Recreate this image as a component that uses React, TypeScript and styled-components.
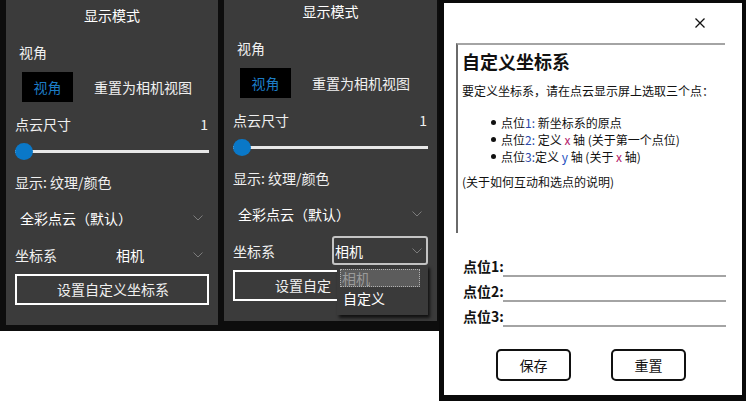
import React from 'react'
import styled, { createGlobalStyle } from 'styled-components'

const GlobalStyle = createGlobalStyle`
  html, body {
    margin: 0;
    padding: 0;
    background: #ffffff;
  }
  body {
    font-family: 'Noto Sans CJK SC', 'Noto Sans', sans-serif;
  }
`

const Chevron = () => (
  <svg width="10" height="6" viewBox="0 0 10 6">
    <polyline points="0.5,0.5 5,5 9.5,0.5" fill="none" stroke="#7c7c7c" strokeWidth="1" />
  </svg>
)

const CloseIcon = () => (
  <svg width="10" height="10" viewBox="0 0 10 10">
    <path d="M0.5 0.5 L9.5 9.5 M9.5 0.5 L0.5 9.5" stroke="#111" strokeWidth="1.3" />
  </svg>
)

interface PanelProps {
  showMenu?: boolean
  lift?: number
  width: number
  height: number
}

const DisplayPanel = ({ showMenu, lift = 0, width, height }: PanelProps) => (
  <Panel $width={width} $height={height}>
    <Title $lift={lift}>显示模式</Title>
    <SubLabel>视角</SubLabel>
    <ViewRow>
      <ViewButton>视角</ViewButton>
      <ResetText>重置为相机视图</ResetText>
    </ViewRow>
    <SizeRow>
      <span>点云尺寸</span>
      <span>1</span>
    </SizeRow>
    <Slider>
      <Track />
      <Thumb />
    </Slider>
    <PlainRow>显示: 纹理/颜色</PlainRow>
    <ColorRow>
      <Select $full>
        <span>全彩点云（默认）</span>
        <Chevron />
      </Select>
    </ColorRow>
    <CoordRow>
      <span>坐标系</span>
      <Select $open={showMenu}>
        <span>相机</span>
        <Chevron />
        {showMenu && (
          <Menu>
            <MenuItem $active>相机</MenuItem>
            <MenuItem>自定义</MenuItem>
          </Menu>
        )}
      </Select>
    </CoordRow>
    <OutlineButton>{showMenu ? '设置自定' : '设置自定义坐标系'}</OutlineButton>
  </Panel>
)

const App = () => (
  <>
    <GlobalStyle />
    <Page>
      <Stage>
        <DisplayPanel width={212} height={325} />
        <DisplayPanel width={213} height={321} lift={4} showMenu />
      </Stage>
      <Dialog>
        <CloseRow>
          <CloseIcon />
        </CloseRow>
        <InfoBox>
          <InfoTitle>自定义坐标系</InfoTitle>
          <InfoText>要定义坐标系，请在点云显示屏上选取三个点：</InfoText>
          <Steps>
            <Step>
              <Dot />
              <span>
                点位<Num>1:</Num> 新坐标系的原点
              </span>
            </Step>
            <Step>
              <Dot />
              <span>
                点位<Num>2:</Num> 定义 <Axis>x</Axis> 轴 (关于第一个点位)
              </span>
            </Step>
            <Step>
              <Dot />
              <span>
                点位<Num>3:</Num>定义 <Axis $y>y</Axis> 轴 (关于 <Axis>x</Axis> 轴)
              </span>
            </Step>
          </Steps>
          <Note>(关于如何互动和选点的说明)</Note>
        </InfoBox>
        <Fields>
          {['点位1:', '点位2:', '点位3:'].map((label) => (
            <FieldRow key={label}>
              <FieldLabel>{label}</FieldLabel>
              <FieldLine />
            </FieldRow>
          ))}
        </Fields>
        <Actions>
          <DialogButton>保存</DialogButton>
          <DialogButton>重置</DialogButton>
        </Actions>
      </Dialog>
    </Page>
  </>
)

const Page = styled.div`
  display: flex;
  align-items: flex-start;
  width: 746px;
  height: 401px;
`

const Stage = styled.div`
  box-sizing: border-box;
  display: flex;
  align-items: flex-start;
  gap: 6px;
  width: 439px;
  height: 331px;
  padding-left: 6px;
  background: #0d0d0d;
`

const Panel = styled.div<{ $width: number; $height: number }>`
  box-sizing: border-box;
  display: flex;
  flex-direction: column;
  width: ${(p) => p.$width}px;
  height: ${(p) => p.$height}px;
  padding: 0 9px;
  background: #3b3b3b;
  color: #f0f0f0;
  font-size: 14px;
  overflow: visible;
`

const Title = styled.div<{ $lift: number }>`
  height: 30px;
  margin-top: ${(p) => -p.$lift}px;
  line-height: 30px;
  text-align: center;
  color: #ffffff;
`

const SubLabel = styled.div`
  height: 24px;
  margin-top: 10px;
  padding-left: 4px;
  line-height: 24px;
`

const ViewRow = styled.div`
  display: flex;
  align-items: center;
  height: 30px;
  margin-top: 8px;
`

const ViewButton = styled.div`
  width: 51px;
  height: 30px;
  margin-left: 7px;
  background: #000000;
  color: #1c7cc4;
  line-height: 30px;
  text-align: center;
`

const ResetText = styled.span`
  margin-left: 21px;
`

const SizeRow = styled.div`
  display: flex;
  justify-content: space-between;
  align-items: center;
  height: 24px;
  margin-top: 10px;
  padding-right: 1px;
`

const Slider = styled.div`
  position: relative;
  display: flex;
  align-items: center;
  height: 17px;
  margin-top: 7px;
`

const Track = styled.div`
  flex: 1;
  height: 3px;
  background: #e8e8e8;
`

const Thumb = styled.div`
  position: absolute;
  left: 0;
  top: 0;
  width: 18px;
  height: 17px;
  border-radius: 50%;
  background: #0a78c8;
`

const PlainRow = styled.div`
  height: 24px;
  margin-top: 10px;
  line-height: 24px;
`

const ColorRow = styled.div`
  display: flex;
  height: 28px;
  margin-top: 10px;
`

const CoordRow = styled.div`
  display: flex;
  align-items: center;
  justify-content: space-between;
  height: 29px;
  margin-top: 8px;
`

const Select = styled.div<{ $full?: boolean; $open?: boolean }>`
  position: relative;
  box-sizing: border-box;
  display: flex;
  align-items: center;
  justify-content: space-between;
  width: ${(p) => (p.$full ? '100%' : '96px')};
  height: ${(p) => (p.$full ? '28px' : '29px')};
  padding: 0 4px 0 ${(p) => (p.$full ? '3px' : '1px')};
  border: 2px solid ${(p) => (p.$open ? '#c4c4c4' : 'transparent')};
  border-radius: 3px;
  color: #ffffff;
`

const Menu = styled.div`
  position: absolute;
  top: calc(100% + 2px);
  left: 3px;
  right: -2px;
  z-index: 2;
  box-sizing: border-box;
  height: 50px;
  padding: 4px 8px 0 3px;
  background: #3a3a3a;
  box-shadow: 2px 3px 3px rgba(0, 0, 0, 0.7);
`

const MenuItem = styled.div<{ $active?: boolean }>`
  box-sizing: border-box;
  height: ${(p) => (p.$active ? '18px' : '22px')};
  padding-left: ${(p) => (p.$active ? '1px' : '2px')};
  border: 1px dotted ${(p) => (p.$active ? '#b0b0b0' : 'transparent')};
  background: ${(p) => (p.$active ? '#5c5c5c' : 'transparent')};
  color: ${(p) => (p.$active ? '#9a9a9a' : '#ffffff')};
  font-size: 14px;
  line-height: ${(p) => (p.$active ? '16px' : '20px')};
`

const OutlineButton = styled.div`
  box-sizing: border-box;
  height: 31px;
  margin-top: 5px;
  padding-left: 40px;
  border: 2px solid #ffffff;
  line-height: 27px;
  color: #f0f0f0;
`

const Dialog = styled.div`
  box-sizing: border-box;
  display: flex;
  flex-direction: column;
  width: 307px;
  height: 401px;
  border-style: solid;
  border-color: #0a0a0a;
  border-width: 3px 4px 6px 5px;
  background: #ffffff;
  color: #111111;
`

const CloseRow = styled.div`
  display: flex;
  justify-content: flex-end;
  align-items: center;
  height: 40px;
  padding-right: 37px;
`

const InfoBox = styled.div`
  box-sizing: border-box;
  width: 269px;
  height: 190px;
  margin-left: 12px;
  padding-left: 4px;
  border-top: 2px solid #a4a4a4;
  border-left: 2px solid #6a6a6a;
`

const InfoTitle = styled.div`
  margin-top: 4px;
  font-size: 18px;
  font-weight: bold;
  line-height: 24px;
`

const InfoText = styled.div`
  margin-top: 10px;
  font-size: 12px;
  line-height: 16px;
`

const Steps = styled.div`
  margin-top: 15px;
  margin-left: 29px;
`

const Step = styled.div`
  display: flex;
  align-items: center;
  font-size: 12px;
  line-height: 17px;
  white-space: pre;
`

const Dot = styled.span`
  width: 5px;
  height: 5px;
  margin-right: 5px;
  border-radius: 50%;
  background: #111111;
`

const Num = styled.span`
  color: #2a48a8;
`

const Axis = styled.span<{ $y?: boolean }>`
  color: ${(p) => (p.$y ? '#2450c0' : '#b4206a')};
`

const Note = styled.div`
  margin-top: 9px;
  font-size: 12px;
  line-height: 16px;
`

const Fields = styled.div`
  display: flex;
  flex-direction: column;
  margin: 20px 16px 0 19px;
`

const FieldRow = styled.div`
  display: flex;
  align-items: center;
  height: 25px;
`

const FieldLabel = styled.span`
  width: 39px;
  font-size: 14px;
  font-weight: bold;
  line-height: 20px;
  white-space: nowrap;
`

const FieldLine = styled.span`
  flex: 1;
  align-self: flex-end;
  margin: 0 0 1px 1px;
  border-top: 2px solid #a4a4a4;
`

const Actions = styled.div`
  display: flex;
  gap: 40px;
  margin-top: 21px;
  padding-left: 52px;
`

const DialogButton = styled.div`
  box-sizing: border-box;
  width: 75px;
  height: 32px;
  border: 2px solid #111111;
  border-radius: 5px;
  font-size: 14px;
  line-height: 28px;
  text-align: center;
`

export default App
